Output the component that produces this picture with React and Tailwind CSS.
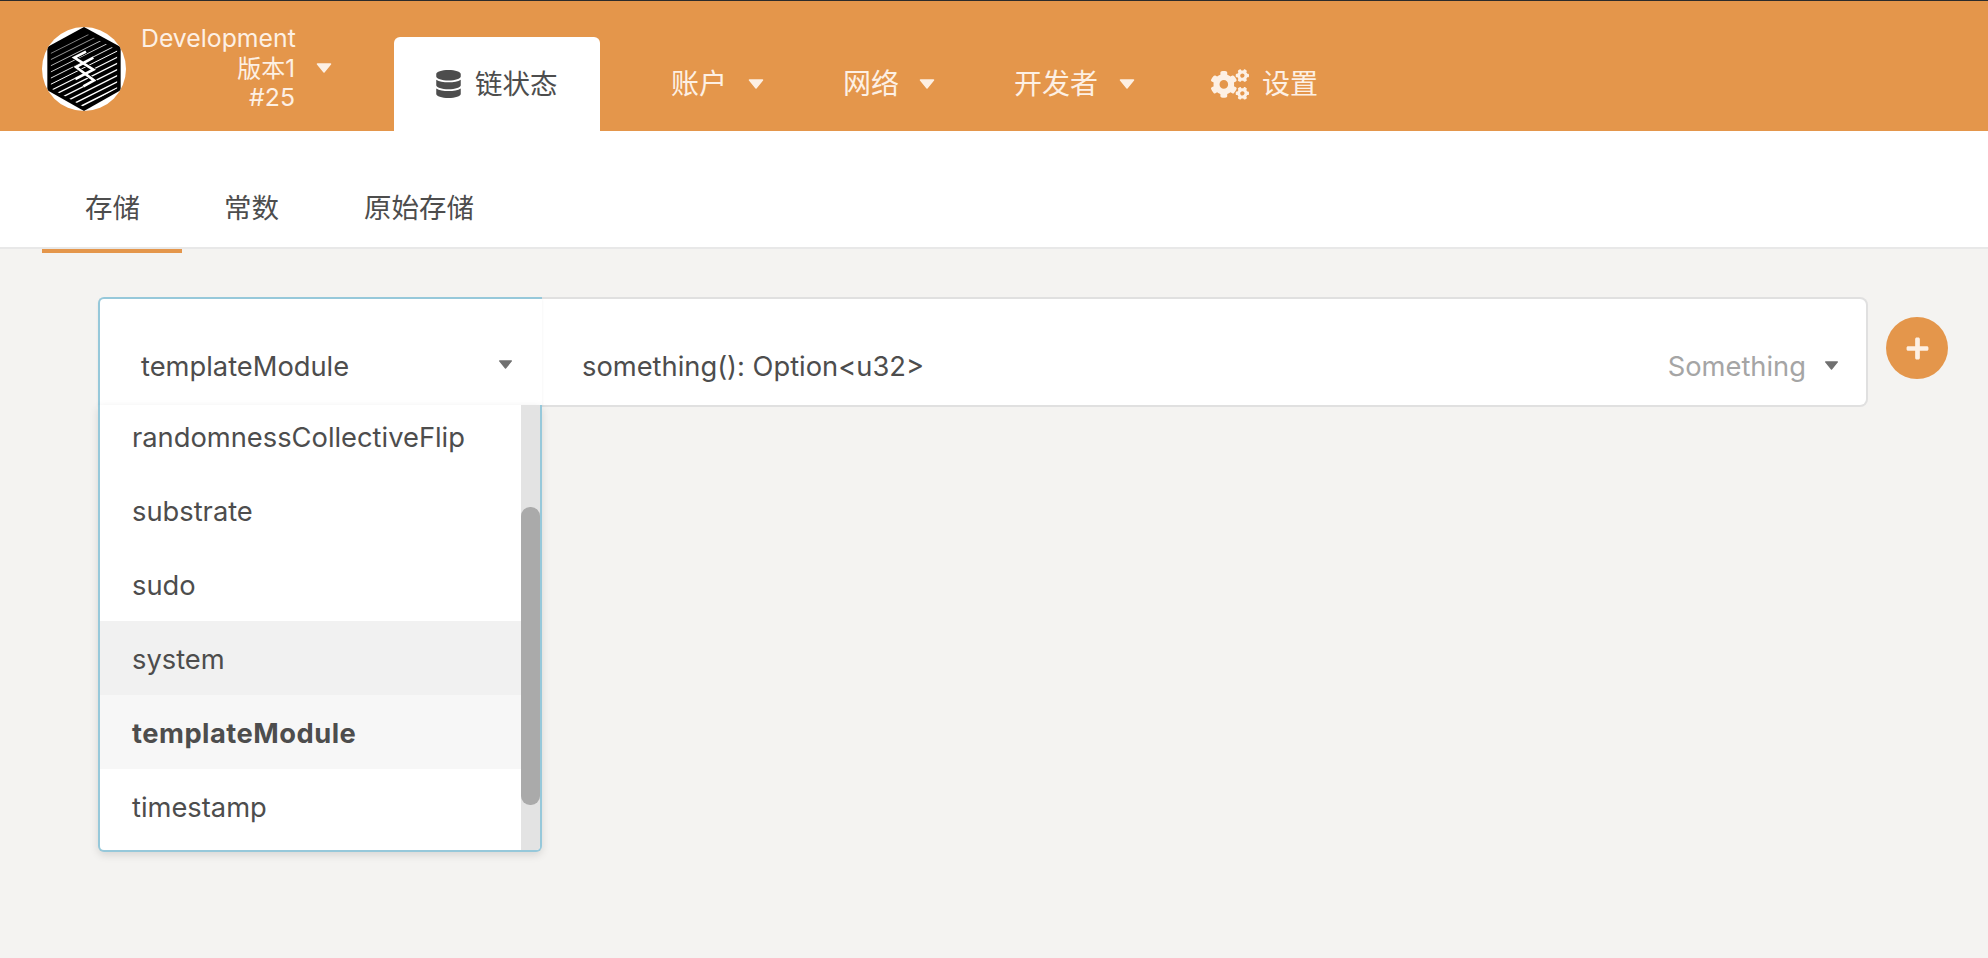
import { FaDatabase, FaCogs, FaPlus } from "react-icons/fa";

const Caret = ({ className }) => (
  <svg viewBox="0 0 16 10" className={className} fill="currentColor">
    <path d="M1.5 1h13L8 9z" stroke="currentColor" strokeWidth="1.5" strokeLinejoin="round" />
  </svg>
);

// hexagon logo
const Logo = () => {
  const lines = [];
  for (let i = 0; i < 18; i++) {
    const y = 92 + i * 18.5;
    lines.push(
      <line key={i} x1="20" y1={y + 20} x2="300" y2={y - 120} stroke="#fff" strokeWidth={1.2 + i * 0.3} />
    );
  }
  return (
    <svg viewBox="36 30 252 252" className="w-[84px] h-[84px] shrink-0 rounded-full bg-white">
      <defs>
        <clipPath id="hexInner">
          <polygon points="162,46 262,100 262,214 162,270 62,214 62,100" />
        </clipPath>
      </defs>
      <polygon points="162,30 272,90 272,220 162,282 52,220 52,90" fill="#000" />
      <g clipPath="url(#hexInner)">{lines}</g>
      <polyline points="168,104 133,122 190,158 136,186" fill="none" stroke="#000" strokeWidth="12" />
      <polyline points="190,122 138,150 192,190 160,208" fill="none" stroke="#000" strokeWidth="12" />
      <polyline points="168,104 133,122 190,158 136,186" fill="none" stroke="#fff" strokeWidth="8" />
      <polyline points="190,122 138,150 192,190 160,208" fill="none" stroke="#fff" strokeWidth="8" />
    </svg>
  );
};

const options = [
  { name: "substrate" },
  { name: "sudo" },
  { name: "system", cls: "bg-[#f1f1f1]" },
  { name: "templateModule", cls: "bg-[#f7f7f7] font-bold tracking-[0.5px]" },
  { name: "timestamp" },
];

export default function App() {
  return (
    <div className="h-[958px] overflow-hidden bg-[#f4f3f1] text-[#4d4d4d] font-['Inter','Noto_Sans_CJK_SC',sans-serif]">
      {/* HEADER */}
      <header className="h-[131px] border-t border-[#2b2b2b] bg-[#e4964b] pl-[42px] flex items-end text-[28px] text-[#fdf0e4]">
        <div className="self-start mt-[24px] flex items-center">
          <Logo />
          <div className="ml-[15px] mt-[-1px] w-[154px] text-right text-[24.8px] leading-[29.5px] whitespace-nowrap">
            <div>Development</div>
            <div className="text-[24px]">版本1</div>
            <div>#25</div>
          </div>
          <Caret className="w-[16px] h-[10px] ml-[21px] mt-[-2px]" />
        </div>

        <div className="ml-[62px] w-[206px] h-[94px] bg-white rounded-t-[6px] text-[#4d4d4d] text-[27.5px] flex items-center pl-[42px]">
          <FaDatabase className="w-[25px] h-[28px]" />
          <span className="ml-[14px] leading-none mt-[1px]">链状态</span>
        </div>

        <div className="h-[104px] pt-[10px] flex items-center">
          <span className="ml-[71px] leading-none">账户</span>
          <Caret className="ml-[21px] w-[16px] h-[10px]" />
          <span className="ml-[79px] leading-none">网络</span>
          <Caret className="ml-[20px] w-[16px] h-[10px]" />
          <span className="ml-[79px] leading-none">开发者</span>
          <Caret className="ml-[21px] w-[16px] h-[10px]" />
          <FaCogs className="ml-[76px] w-[38px] h-[31px]" />
          <span className="ml-[13px] leading-none">设置</span>
        </div>
      </header>

      {/* TABS */}
      <nav className="h-[118px] bg-white border-b-2 border-[#e8e8e8] pl-[42px] flex items-end text-[27.5px]">
        <div className="h-[76px] mb-[-6px] px-[43px] w-[140px] pt-[11px] border-b-4 border-[#e4964b] leading-[40px] whitespace-nowrap">存储</div>
        <div className="h-[76px] mb-[-6px] px-[42px] pt-[11px] leading-[40px]">常数</div>
        <div className="h-[76px] mb-[-6px] px-[43px] pt-[11px] leading-[40px]">原始存储</div>
      </nav>

      {/* SELECT ROW */}
      <div className="mt-[48px] ml-[98px] flex items-start">
        <div className="w-[1770px] h-[110px] flex">
          <div className="relative z-10 w-[444px] h-[108px] bg-white border-l-2 border-t-2 border-[#96c8da] rounded-tl-[6px] pl-[41px] pt-[48px] text-[27.3px] leading-[40px] shadow-[0_2px_3px_rgba(0,0,0,0.06)]">
            <div className="flex items-center pr-[29px] justify-between">
              <span>templateModule</span>
              <Caret className="w-[15px] h-[9px] text-[#707070] mt-[-6px]" />
            </div>

            {/* MENU */}
            <div className="absolute left-[-2px] right-0 top-full h-[447px] bg-white border-x-2 border-b-2 border-[#96c8da] rounded-b-[6px] overflow-hidden shadow-[0_3px_8px_rgba(0,0,0,0.12)]">
              <div className="absolute right-0 top-0 bottom-0 w-[19px] bg-[#e3e3e3]">
                <div className="absolute left-0 right-0 top-[102px] h-[298px] rounded-[9px] bg-[#aaaaaa]"></div>
              </div>
              <div className="h-[68px] pl-[32px] pt-[13px]">randomnessCollectiveFlip</div>
              {options.map((o) => (
                <div key={o.name} className={`h-[74px] mr-[19px] pl-[32px] pt-[3px] flex items-center ${o.cls || ""}`}>
                  {o.name}
                </div>
              ))}
            </div>
          </div>

          <div className="flex-1 bg-white border-2 border-l-0 border-[#e0e0e0] rounded-r-[8px] pl-[40px] pr-[27px] pt-[48px] text-[27.3px] leading-[40px] flex justify-between">
            <span>something(): Option&lt;u32&gt;</span>
            <span className="flex items-start text-[#a5a5a5]">
              Something
              <Caret className="ml-[18px] mt-[14px] w-[15px] h-[9px] text-[#707070]" />
            </span>
          </div>
        </div>

        <button className="mt-[20px] ml-[18px] w-[62px] h-[62px] rounded-full bg-[#e4964b] text-[#fdf0e4] flex items-center justify-center">
          <FaPlus className="w-[25px] h-[25px]" />
        </button>
      </div>
    </div>
  );
}
